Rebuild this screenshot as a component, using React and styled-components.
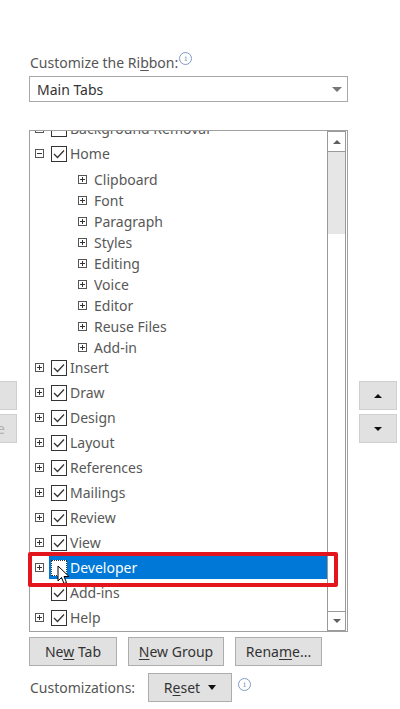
import React from "react";
import styled, { createGlobalStyle } from "styled-components";

const Global = createGlobalStyle`
  html, body { margin: 0; padding: 0; background: #ffffff; }
  body { font-family: "Noto Sans", "Open Sans", sans-serif; color: #444; }
`;

const Page = styled.div`
  width: 400px;
  height: 709px;
  overflow: hidden;
  padding-top: 52px;
  box-sizing: border-box;
`;

const Label = styled.div`
  padding-left: 30px;
  height: 22px;
  line-height: 22px;
  font-size: 14px;
  color: #555;
  display: flex;
  align-items: flex-start;
  u { text-decoration: underline; text-underline-offset: 2px; }
`;

const InfoDot = styled.span`
  display: inline-flex;
  width: 11px;
  height: 11px;
  border: 1px solid #7f9bc4;
  border-radius: 50%;
  color: #7f9bc4;
  font-size: 8px;
  line-height: 11px;
  justify-content: center;
  font-family: "DejaVu Serif", serif;
  margin-left: ${(p) => p.$left || 1}px;
  margin-top: ${(p) => p.$top || 0}px;
`;

const Select = styled.div`
  margin: 2px 0 0 29px;
  width: 319px;
  height: 26px;
  box-sizing: border-box;
  border: 1px solid #a8a8a8;
  display: flex;
  align-items: center;
  justify-content: space-between;
  padding: 0 5px 0 7px;
  font-size: 14px;
  color: #333;
`;

const Caret = styled.span`
  width: 0;
  height: 0;
  border-left: ${(p) => p.$w || 5}px solid transparent;
  border-right: ${(p) => p.$w || 5}px solid transparent;
  border-top: ${(p) => p.$h || 5}px solid ${(p) => p.$c || "#666"};
`;

const UpCaret = styled.span`
  width: 0;
  height: 0;
  border-left: ${(p) => p.$w || 5}px solid transparent;
  border-right: ${(p) => p.$w || 5}px solid transparent;
  border-bottom: ${(p) => p.$h || 5}px solid ${(p) => p.$c || "#666"};
`;

const Middle = styled.div`
  margin-top: 28px;
  display: grid;
  grid-template-columns: 17px 319px 37px;
  column-gap: 12px;
  align-items: start;
`;

const SideCol = styled.div`
  padding-top: 251px;
  display: flex;
  flex-direction: column;
  gap: 4px;
  overflow: hidden;
  align-items: ${(p) => (p.$left ? "flex-end" : "stretch")};
  margin-left: ${(p) => (p.$left ? 0 : -1)}px;
`;

const SideButton = styled.div`
  height: 29px;
  box-sizing: border-box;
  background: #e1e1e1;
  border: 1px solid #cfcfcf;
  display: flex;
  align-items: center;
  justify-content: ${(p) => (p.$left ? "flex-end" : "center")};
  padding-right: ${(p) => p.$pad || 0}px;
  width: ${(p) => (p.$left ? "80px" : "auto")};
  flex-shrink: 0;
  font-size: 14px;
  color: #b0b0b0;
  white-space: nowrap;
`;

const ListBox = styled.div`
  position: relative;
  height: 502px;
  box-sizing: border-box;
  border: 1px solid #a0a0a0;
  display: flex;
`;

const TreeArea = styled.div`
  flex: 1;
  overflow: hidden;
`;

const TreeInner = styled.div`
  margin-top: -15px;
`;

const Row = styled.div`
  height: ${(p) => (p.$sub ? 21 : 25)}px;
  display: flex;
  align-items: center;
  padding-left: ${(p) => (p.$sub ? 48 : 5)}px;
  font-size: 14px;
  color: #585858;
  white-space: nowrap;
`;

const SubGroup = styled.div`
  padding-top: 3px;
  margin-bottom: -3px;
`;

const ExpandSlot = styled.span`
  width: 9px;
  height: 9px;
  flex-shrink: 0;
  display: flex;
  margin-right: 7px;
`;

const CheckSlot = styled.span`
  width: 16px;
  height: 16px;
  box-sizing: border-box;
  border: 1px ${(p) => (p.$focus ? "dotted" : "solid")} #333;
  background: #fff;
  flex-shrink: 0;
  display: flex;
  align-items: center;
  justify-content: center;
  margin-right: 3px;
`;

const Highlight = styled.div`
  position: relative;
  flex: 1;
  height: 23px;
  margin-left: -2px;
  padding-left: 2px;
  background: #0078d7;
  color: #fff;
  display: flex;
  align-items: center;
`;

const CursorMark = styled.svg`
  position: absolute;
  left: 8px;
  top: 9px;
`;

const ScrollBar = styled.div`
  width: 19px;
  margin-right: 1px;
  box-sizing: border-box;
  border-left: 1px solid #9a9a9a;
  border-right: 1px solid #9a9a9a;
  display: flex;
  flex-direction: column;
`;

const ScrollBtn = styled.div`
  height: ${(p) => p.$h}px;
  box-sizing: border-box;
  border-top: 1px solid #9a9a9a;
  border-bottom: 1px solid #9a9a9a;
  background: #fff;
  display: flex;
  align-items: center;
  justify-content: center;
`;

const Track = styled.div`
  height: 82px;
  background: #e6e6e6;
`;

const Thumb = styled.div`
  flex: 1;
  background: #fff;
`;

const RedFrame = styled.div`
  position: absolute;
  left: -2px;
  top: 421px;
  width: 310px;
  height: 35px;
  box-sizing: border-box;
  border: 4px solid #e3161d;
  border-radius: 2px;
  pointer-events: none;
`;

const ButtonRow = styled.div`
  margin-top: 5px;
  padding-left: 29px;
  display: flex;
  gap: 11px;
`;

const Btn = styled.div`
  width: ${(p) => p.$w}px;
  height: 29px;
  box-sizing: border-box;
  background: #e1e1e1;
  border: 1px solid #adadad;
  display: flex;
  align-items: center;
  justify-content: center;
  gap: 8px;
  font-size: 14px;
  color: #333;
  u { text-decoration: underline; text-underline-offset: 2px; }
`;

const CustomRow = styled.div`
  margin-top: 7px;
  padding-left: 30px;
  display: flex;
  align-items: center;
  font-size: 14px;
  color: #555;
`;

const CustomLabel = styled.span`
  width: 118px;
`;

const Expander = ({ open }) => (
  <svg width="9" height="9" viewBox="0 0 9 9">
    <rect x="0.5" y="0.5" width="8" height="8" fill="#fff" stroke="#555" />
    <line x1="2" y1="4.5" x2="7" y2="4.5" stroke="#333" />
    {!open && <line x1="4.5" y1="2" x2="4.5" y2="7" stroke="#333" />}
  </svg>
);

const Tick = () => (
  <svg width="12" height="10" viewBox="0 0 12 10">
    <path d="M1 5 L4.5 8.5 L11 1.5" fill="none" stroke="#333" strokeWidth="1.3" />
  </svg>
);

const topTabs = [
  "Insert",
  "Draw",
  "Design",
  "Layout",
  "References",
  "Mailings",
  "Review",
  "View",
];

const homeGroups = [
  "Clipboard",
  "Font",
  "Paragraph",
  "Styles",
  "Editing",
  "Voice",
  "Editor",
  "Reuse Files",
  "Add-in",
];

const TabRow = ({ label, checked = true, expander = true, open = false }) => (
  <Row>
    <ExpandSlot>{expander && <Expander open={open} />}</ExpandSlot>
    <CheckSlot>{checked && <Tick />}</CheckSlot>
    {label}
  </Row>
);

export default function App() {
  return (
    <Page>
      <Global />
      <Label>
        Customize the Ri<u>b</u>bon:
        <InfoDot>i</InfoDot>
      </Label>
      <Select>
        Main Tabs
        <Caret $w={5} $h={5} $c="#777" />
      </Select>

      <Middle>
        <SideCol $left>
          <SideButton $left $pad={22}>Add &gt;&gt;</SideButton>
          <SideButton $left $pad={11}>&lt;&lt; Remove</SideButton>
        </SideCol>

        <ListBox>
          <TreeArea>
            <TreeInner>
              <TabRow label="Background Removal" checked={false} open />
              <TabRow label="Home" open />
              <SubGroup>
                {homeGroups.map((g) => (
                  <Row $sub key={g}>
                    <ExpandSlot>
                      <Expander />
                    </ExpandSlot>
                    {g}
                  </Row>
                ))}
              </SubGroup>
              {topTabs.map((t) => (
                <TabRow label={t} key={t} />
              ))}
              <Row>
                <ExpandSlot>
                  <Expander />
                </ExpandSlot>
                <Highlight>
                  <CheckSlot $focus />
                  Developer
                  <CursorMark width="14" height="21" viewBox="0 0 14 21">
                    <path
                      d="M1 1 L1 16 L4.5 12.5 L7 18.5 L9.5 17.5 L7 11.5 L12 11.5 Z"
                      fill="#fff"
                      stroke="#000"
                      strokeWidth="1"
                      strokeLinejoin="round"
                    />
                  </CursorMark>
                </Highlight>
              </Row>
              <TabRow label="Add-ins" expander={false} />
              <TabRow label="Help" />
            </TreeInner>
          </TreeArea>
          <ScrollBar>
            <ScrollBtn $h={21}>
              <UpCaret $w={4} $h={4} $c="#606060" />
            </ScrollBtn>
            <Track />
            <Thumb />
            <ScrollBtn $h={20}>
              <Caret $w={4} $h={4} $c="#606060" />
            </ScrollBtn>
          </ScrollBar>
          <RedFrame />
        </ListBox>

        <SideCol>
          <SideButton>
            <UpCaret $w={4} $h={4} $c="#111" />
          </SideButton>
          <SideButton>
            <Caret $w={4} $h={4} $c="#111" />
          </SideButton>
        </SideCol>
      </Middle>

      <ButtonRow>
        <Btn $w={88}>
          <span>
            Ne<u>w</u> Tab
          </span>
        </Btn>
        <Btn $w={96}>
          <span>
            <u>N</u>ew Group
          </span>
        </Btn>
        <Btn $w={87}>
          <span>
            Rena<u>m</u>e...
          </span>
        </Btn>
      </ButtonRow>

      <CustomRow>
        <CustomLabel>Customizations:</CustomLabel>
        <Btn $w={84}>
          <span>
            R<u>e</u>set
          </span>
          <Caret $w={4} $h={5} $c="#111" />
        </Btn>
        <InfoDot $left={6} $top={-6}>i</InfoDot>
      </CustomRow>
    </Page>
  );
}
